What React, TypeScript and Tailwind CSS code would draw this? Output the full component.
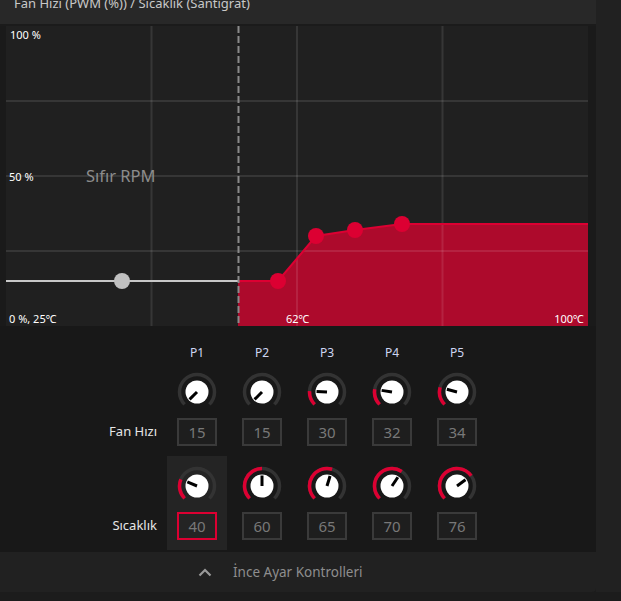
import React from 'react';

const FONT = { fontFamily: '"Noto Sans", "DejaVu Sans", sans-serif' };

type KnobProps = { value: number; min: number; max: number };

function Knob({ value, min, max }: KnobProps) {
  const angle = -135 + (270 * (value - min)) / (max - min);
  const pt = (a: number, r: number) => {
    const rad = (a * Math.PI) / 180;
    return [20 + r * Math.sin(rad), 20 - r * Math.cos(rad)];
  };
  const arc = (a1: number, a2: number, r: number) => {
    const [x1, y1] = pt(a1, r);
    const [x2, y2] = pt(a2, r);
    const large = a2 - a1 > 180 ? 1 : 0;
    return `M${x1} ${y1} A${r} ${r} 0 ${large} 1 ${x2} ${y2}`;
  };
  const [px, py] = pt(angle, 10.5);

  return (
    <svg width="40" height="40" viewBox="0 0 40 40">
      <path d={arc(-135, 135, 17.5)} fill="none" stroke="#333333" strokeWidth="3.5" />
      {angle > -134 && (
        <path d={arc(-135, angle, 17.5)} fill="none" stroke="#dc0032" strokeWidth="3.5" />
      )}
      <circle cx="20" cy="20" r="11.5" fill="#ffffff" />
      <line x1="20" y1="20" x2={px} y2={py} stroke="#000000" strokeWidth="3" />
    </svg>
  );
}

function ValueBox({ value, active = false }: { value: number; active?: boolean }) {
  return (
    <div
      className={`w-[40px] h-[28px] border-2 flex items-center justify-center text-[15px] text-[#787878] ${
        active ? 'border-[#dc0032]' : 'border-[#3a3a3a] bg-[#1e1e1e]'
      }`}
    >
      {value}
    </div>
  );
}

const points = [
  { name: 'P1', fan: 15, temp: 40 },
  { name: 'P2', fan: 15, temp: 60 },
  { name: 'P3', fan: 30, temp: 65 },
  { name: 'P4', fan: 32, temp: 70 },
  { name: 'P5', fan: 34, temp: 76 },
];

function Chart() {
  const grid = 'rgba(255,255,255,0.1)';
  return (
    <div className="relative w-[582px] h-[300px] bg-[#202020] text-white">
      <svg width="582" height="300" viewBox="0 0 582 300" className="block">
        {/* curve fill */}
        <path
          d="M232 255 L272 255 L310 210 L349 204 L396 198 L582 198 L582 300 L232 300 Z"
          fill="#ad0a2c"
        />
        {/* grid */}
        <line x1="145.5" y1="0" x2="145.5" y2="300" stroke={grid} strokeWidth="2" />
        <line x1="291" y1="0" x2="291" y2="300" stroke={grid} strokeWidth="2" />
        <line x1="436.5" y1="0" x2="436.5" y2="300" stroke={grid} strokeWidth="2" />
        <line x1="0" y1="75" x2="582" y2="75" stroke={grid} strokeWidth="2" />
        <line x1="0" y1="150" x2="582" y2="150" stroke={grid} strokeWidth="2" />
        <line x1="0" y1="225" x2="582" y2="225" stroke={grid} strokeWidth="2" />
        {/* curve line */}
        <polyline
          points="232,255 272,255 310,210 349,204 396,198 582,198"
          fill="none"
          stroke="#dc0032"
          strokeWidth="2"
        />
        {/* zero rpm */}
        <line x1="0" y1="255" x2="232" y2="255" stroke="#c8c8c8" strokeWidth="2" />
        <circle cx="116" cy="255" r="8" fill="#c0c0c0" />
        <line
          x1="232.5"
          y1="0"
          x2="232.5"
          y2="300"
          stroke="#8a8a8a"
          strokeWidth="2"
          strokeDasharray="7 3"
        />
        {[
          [272, 255],
          [310, 210],
          [349, 204],
          [396, 198],
        ].map(([x, y], i) => (
          <circle key={i} cx={x} cy={y} r="8" fill="#dc0032" />
        ))}
      </svg>

      <span className="absolute left-[4px] top-[3px] text-[11px] leading-none">100 %</span>
      <span className="absolute left-[3px] top-[145px] text-[11px] leading-none">50 %</span>
      <span className="absolute left-[80px] top-[142px] text-[16.5px] leading-none text-[#8c8c8c]">
        Sıfır RPM
      </span>
      <span className="absolute left-[3px] top-[287px] text-[11px] leading-none">0 %, 25℃</span>
      <span className="absolute left-[280px] top-[287px] text-[11px] leading-none">62℃</span>
      <span className="absolute right-[4px] top-[287px] text-[11px] leading-none">100℃</span>
    </div>
  );
}

export default function App() {
  return (
    <div className="w-[621px] h-[601px] bg-[#1c1c1c] flex flex-col overflow-hidden" style={FONT}>
      <div className="flex h-[592px]">
        {/* Main panel */}
        <div className="w-[596px] flex flex-col rounded-br-[4px] overflow-hidden">
          {/* Title */}
          <div className="h-[24px] bg-[#282828] overflow-hidden px-[14px]">
            <div className="-mt-[3px] text-[13px] leading-none text-[#c8c8c8] whitespace-nowrap">
              Fan Hızı (PWM (%)) / Sıcaklık (Santigrat)
            </div>
          </div>
          <div className="h-[2px] bg-[#1b1b1b]" />

          {/* Chart */}
          <div className="bg-[#1a1a1a] pl-[6px] pr-[8px]">
            <Chart />
          </div>

          {/* Controls */}
          <div className="bg-[#181818] pt-[19px] pb-[2px]">
            <div className="flex">
              <div className="w-[157px]" />
              <div className="ml-[10px] flex gap-[5px]">
                {points.map((p) => (
                  <div
                    key={p.name}
                    className="w-[60px] h-[16px] text-center text-[12px] leading-4 text-[#cdd6f2]"
                  >
                    {p.name}
                  </div>
                ))}
              </div>
            </div>

            {/* Fan speed row */}
            <div className="flex mt-[11px]">
              <div className="w-[157px] flex items-end justify-end">
                <div className="h-[28px] flex items-center text-[13px] text-[#e6e6e6]">Fan Hızı</div>
              </div>
              <div className="ml-[10px] flex gap-[5px]">
                {points.map((p) => (
                  <div key={p.name} className="w-[60px] flex flex-col items-center gap-[6px]">
                    <Knob value={p.fan} min={15} max={100} />
                    <ValueBox value={p.fan} />
                  </div>
                ))}
              </div>
            </div>

            {/* Temperature row */}
            <div className="flex mt-[10px]">
              <div className="w-[157px] flex items-end justify-end pb-[10px]">
                <div className="h-[28px] flex items-center text-[13px] text-[#e6e6e6]">Sıcaklık</div>
              </div>
              <div className="ml-[10px] flex gap-[5px]">
                {points.map((p, i) => (
                  <div
                    key={p.name}
                    className={`w-[60px] flex flex-col items-center gap-[6px] pt-[10px] pb-[10px] ${
                      i === 0 ? 'bg-[#242424]' : ''
                    }`}
                  >
                    <Knob value={p.temp} min={20} max={100} />
                    <ValueBox value={p.temp} active={i === 0} />
                  </div>
                ))}
              </div>
            </div>
          </div>

          {/* Fine tuning bar */}
          <div className="h-[40px] bg-[#212121] flex items-center pl-[198px] gap-[21px]">
            <svg width="14" height="9" viewBox="0 0 14 9">
              <polyline points="1.5,7.5 7,2 12.5,7.5" fill="none" stroke="#9a9a9a" strokeWidth="2.2" />
            </svg>
            <span className="text-[13.5px] text-[#8e8e8e]">İnce Ayar Kontrolleri</span>
          </div>
        </div>

        {/* Right gutter */}
        <div className="flex-1 bg-[#212121]" />
      </div>
      <div className="flex-1 bg-[#1c1c1c]" />
    </div>
  );
}
